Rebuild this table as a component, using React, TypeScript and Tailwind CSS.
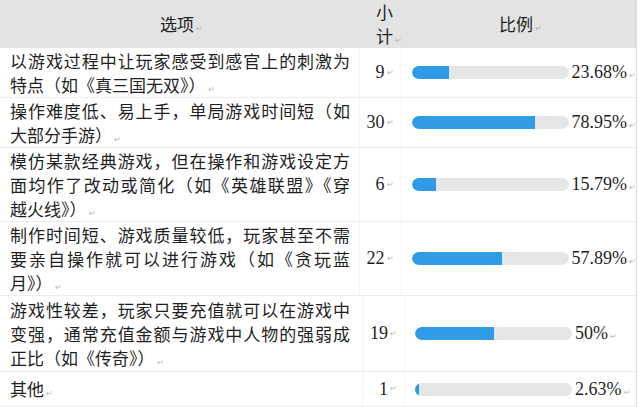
const rows = [
  {
    lines: ["以游戏过程中让玩家感受到感官上的刺激为", "特点（如《真三国无双》）"],
    count: 9,
    pct: 23.68,
    label: "23.68%",
    h: "h-[50px]",
  },
  {
    lines: ["操作难度低、易上手，单局游戏时间短（如", "大部分手游）"],
    count: 30,
    pct: 78.95,
    label: "78.95%",
    h: "h-[50px]",
  },
  {
    lines: ["模仿某款经典游戏，但在操作和游戏设定方", "面均作了改动或简化（如《英雄联盟》《穿", "越火线》）"],
    count: 6,
    pct: 15.79,
    label: "15.79%",
    h: "h-[74px]",
  },
  {
    lines: ["制作时间短、游戏质量较低，玩家甚至不需", "要亲自操作就可以进行游戏（如《贪玩蓝", "月》）"],
    count: 22,
    pct: 57.89,
    label: "57.89%",
    h: "h-[74px]",
  },
  {
    lines: ["游戏性较差，玩家只要充值就可以在游戏中", "变强，通常充值金额与游戏中人物的强弱成", "正比（如《传奇》）"],
    count: 19,
    pct: 50,
    label: "50%",
    h: "h-[76px]",
  },
  {
    lines: ["其他"],
    count: 1,
    pct: 2.63,
    label: "2.63%",
    h: "h-[35px]",
  },
];

// little Word return mark after each cell
const Mark = () => <span className="ml-[2px] text-[8px] leading-none text-[#b5b5b5] align-baseline">↵</span>;

const cjk = "font-['Noto_Sans_CJK_SC','Noto_Sans',sans-serif]";
const serif = "font-['Liberation_Serif','Noto_Sans_CJK_SC',serif]";

export default function App() {
  return (
    <div className="w-[640px] h-[407px] overflow-hidden bg-white text-[#1f1f1f]">
      <div className="w-[637px] border-r border-[#dcdcdc]">
        <div className={"flex h-[48px] bg-[#e3e3e3] text-[17px] " + cjk}>
          <div className="w-[363px] flex items-center justify-center">
            <span>
              选项
              <Mark />
            </span>
          </div>
          <div className="w-[42px] flex flex-col justify-center pl-[13px] leading-[24px]">
            <span>小</span>
            <span>
              计<Mark />
            </span>
          </div>
          <div className="flex-1 flex items-center justify-center">
            <span>
              比例
              <Mark />
            </span>
          </div>
        </div>

        {rows.map((row, i) => (
          <div key={i} className={"flex border-b border-[#ededed] " + row.h}>
            <div className={"w-[363px] flex flex-col justify-center pl-[10px] text-[17px] leading-[24px] border-r border-[#f4f4f4] " + cjk}>
              {row.lines.map((line, j) =>
                j < row.lines.length - 1 ? (
                  <div key={j} className="w-[340px] text-justify [text-align-last:justify]">
                    {line}
                  </div>
                ) : (
                  <div key={j}>
                    {line}
                    <Mark />
                  </div>
                )
              )}
            </div>
            <div className={"w-[42px] flex items-center justify-end pr-[7px] text-[18px] border-r border-[#f4f4f4] " + serif}>
              {row.count}
              <Mark />
            </div>
            <div className="flex-1 flex items-center pl-[10px]">
              <div className="w-[157px] h-[13px] rounded-full bg-[#e6e6e6] overflow-hidden">
                <div className="h-full rounded-l-full bg-[#2f9be6]" style={{ width: `${row.pct}%` }} />
              </div>
              <span className={"ml-[3px] text-[18px] " + serif}>
                {row.label}
                <Mark />
              </span>
            </div>
          </div>
        ))}
      </div>
    </div>
  );
}
